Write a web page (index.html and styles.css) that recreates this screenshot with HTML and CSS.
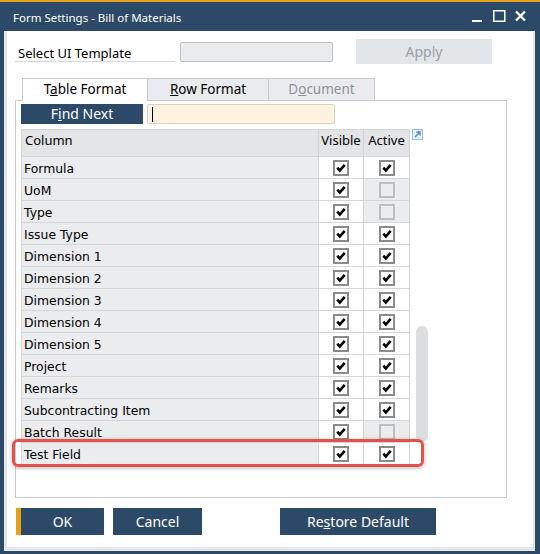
FILE: index.html
```html
<!DOCTYPE html>
<html>
<head>
<meta charset="utf-8">
<link rel="stylesheet" href="styles.css">
</head>
<body>
<div class="window">
  <div class="titlebar">
    <span class="title">Form Settings - Bill of Materials</span>
    <svg class="controls" width="80" height="29" viewBox="0 0 80 29">
      <rect x="12" y="18" width="10" height="2" fill="#fff"/>
      <rect x="33.75" y="8.75" width="11" height="10.5" fill="none" stroke="#fff" stroke-width="1.5"/>
      <path d="M56 9.5 L65 18.5 M65 9.5 L56 18.5" stroke="#fff" stroke-width="2.3"/>
    </svg>
  </div>
  <div class="client">
    <div class="tpl-row">
      <div class="tpl-label">Select UI Template</div>
      <div class="tpl-input"></div>
      <button class="apply">Apply</button>
    </div>
    <div class="tabs">
      <div class="tab active">T<u>a</u>ble Format</div>
      <div class="tab tab-row"><u>R</u>ow Format</div>
      <div class="tab tab-doc disabled">D<u>o</u>cument</div>
    </div>
    <div class="panel">
      <div class="find-row">
        <button class="btn find">F<u>i</u>nd Next</button>
        <div class="find-input"><span class="caret"></span></div>
      </div>
      <div class="grid-area">
        <div class="table-wrap">
          <div class="grid">
            <div class="hd hd-name">Column</div>
            <div class="hd">Visible</div>
            <div class="hd">Active</div>

            <div class="c-name">Formula</div><div class="c-chk"><span class="cb on"></span></div><div class="c-chk"><span class="cb on"></span></div>
            <div class="c-name">UoM</div><div class="c-chk"><span class="cb on"></span></div><div class="c-chk off"><span class="cb dis"></span></div>
            <div class="c-name">Type</div><div class="c-chk"><span class="cb on"></span></div><div class="c-chk off"><span class="cb dis"></span></div>
            <div class="c-name">Issue Type</div><div class="c-chk"><span class="cb on"></span></div><div class="c-chk"><span class="cb on"></span></div>
            <div class="c-name">Dimension 1</div><div class="c-chk"><span class="cb on"></span></div><div class="c-chk"><span class="cb on"></span></div>
            <div class="c-name">Dimension 2</div><div class="c-chk"><span class="cb on"></span></div><div class="c-chk"><span class="cb on"></span></div>
            <div class="c-name">Dimension 3</div><div class="c-chk"><span class="cb on"></span></div><div class="c-chk"><span class="cb on"></span></div>
            <div class="c-name">Dimension 4</div><div class="c-chk"><span class="cb on"></span></div><div class="c-chk"><span class="cb on"></span></div>
            <div class="c-name">Dimension 5</div><div class="c-chk"><span class="cb on"></span></div><div class="c-chk"><span class="cb on"></span></div>
            <div class="c-name">Project</div><div class="c-chk"><span class="cb on"></span></div><div class="c-chk"><span class="cb on"></span></div>
            <div class="c-name">Remarks</div><div class="c-chk"><span class="cb on"></span></div><div class="c-chk"><span class="cb on"></span></div>
            <div class="c-name">Subcontracting Item</div><div class="c-chk"><span class="cb on"></span></div><div class="c-chk"><span class="cb on"></span></div>
            <div class="c-name">Batch Result</div><div class="c-chk"><span class="cb on"></span></div><div class="c-chk off"><span class="cb dis"></span></div>
            <div class="c-name">Test Field</div><div class="c-chk"><span class="cb on"></span></div><div class="c-chk"><span class="cb on"></span></div>
          </div>
          <div class="highlight"></div>
        </div>
        <div class="side">
          <svg class="expand" width="11" height="11" viewBox="0 0 11 11">
            <rect x="0.5" y="0.5" width="10" height="10" fill="#e3eef9" stroke="#9cc0e4"/>
            <path d="M3 8 L8 3 M4.5 3 H8 V6.5" fill="none" stroke="#4f8ac6" stroke-width="1.4"/>
          </svg>
          <div class="thumb"></div>
        </div>
      </div>
    </div>
    <div class="footer">
      <button class="btn ok">OK</button>
      <button class="btn cancel">Cancel</button>
      <button class="btn restore">Re<u>s</u>tore Default</button>
    </div>
  </div>
</div>
</body>
</html>
```
FILE: styles.css
```css
* { box-sizing: border-box; }
html, body { margin: 0; padding: 0; background: #fff; }
body { font-family: "DejaVu Sans", sans-serif; font-size: 12px; color: #000; }

.window {
  width: 540px;
  height: 554px;
  background: #2c4a67;
  display: flex;
  flex-direction: column;
}
.titlebar {
  height: 31px;
  border-top: 2px solid #e6a21e;
  display: flex;
  align-items: center;
  padding-left: 13px;
  padding-top: 1px;
  color: #fff;
  font-family: "Noto Sans", sans-serif;
  font-size: 11.5px;
}
.controls { margin-left: auto; margin-right: 0; margin-top: -1px; display: block; }

.client {
  flex: 1;
  margin: 0 5px 3px 4px;
  background: #fff;
  border-left: 3px solid #e4e6e9;
  border-right: 2px solid #e4e6e9;
  border-bottom: 4px solid #e4e6e9;
}

.tpl-row {
  display: flex;
  align-items: flex-start;
  margin: 8px 0 0 8px;
  height: 25px;
}
.tpl-label {
  width: 160px;
  height: 23px;
  padding: 6px 0 0 3px;
  line-height: 16px;
  border-bottom: 1px solid #d6d8da;
  font-size: 13px;
  font-family: "Noto Sans", sans-serif;
}
.tpl-input {
  margin: 3px 0 0 5px;
  width: 153px;
  height: 20px;
  border: 1px solid #bfc1c3;
  border-radius: 2px;
  background: #e9ebed;
}
.apply {
  margin-left: 23px;
  width: 136px;
  height: 25px;
  border: none;
  background: #e3e6e9;
  color: #9aa0a6;
  font-family: "Noto Sans", sans-serif;
  font-size: 14px;
  padding: 0;
}

.tabs {
  display: flex;
  align-items: flex-start;
  margin: 14px 0 -1px 15px;
  height: 23px;
  position: relative;
  z-index: 1;
  font-family: "Noto Sans", sans-serif;
  font-size: 13.5px;
}
.tab {
  height: 22px;
  border: 1px solid #c9cbce;
  border-bottom: none;
  background: #e9ebee;
  text-align: center;
  line-height: 20px;
  color: #000;
}
.tab.active { width: 126px; height: 23px; background: #fff; }
.tab-row { width: 122px; margin-left: -1px; }
.tab-doc { width: 107px; margin-left: -1px; }
.tab.disabled { color: #8d9399; }

.panel {
  margin-left: 8px;
  width: 492px;
  height: 398px;
  border: 1px solid #c9cbce;
  padding: 3px 5px;
}
.find-row { display: flex; gap: 4px; }
.btn {
  border: none;
  background: #2c4a67;
  color: #fff;
  font-family: "Noto Sans", sans-serif;
  font-size: 14px;
  padding: 0;
}
.find { width: 122px; height: 20px; line-height: 18px; }
.find-input {
  width: 188px;
  height: 20px;
  background: #fdf2de;
  border: 1px solid #dcd3c3;
  border-radius: 2px;
  display: flex;
  align-items: center;
}
.caret { width: 1px; height: 15px; background: #000; margin-left: 4px; }

.grid-area { display: flex; margin-top: 5px; }
.table-wrap { position: relative; width: 390px; }
.grid {
  display: grid;
  grid-template-columns: 297px 45px 46px;
  grid-template-rows: 27px;
  grid-auto-rows: 22px;
  width: 389px;
  border-left: 1px solid #d3d5d8;
  border-top: 1px solid #d3d5d8;
}
.grid > div {
  border-right: 1px solid #d3d5d8;
  border-bottom: 1px solid #d3d5d8;
}
.hd {
  background: #e3e4e6;
  display: flex;
  align-items: center;
  justify-content: center;
  font-family: "Noto Sans", sans-serif;
  font-size: 13px;
  padding-bottom: 6px;
}
.hd-name { justify-content: flex-start; padding-left: 3px; }
.c-name {
  background: #eaecee;
  padding-left: 2px;
  line-height: 23px;
  font-size: 12.4px;
}
.c-chk {
  background: #fff;
  display: flex;
  align-items: center;
  justify-content: center;
}
.c-chk.off { background: #eaecee; }
.cb {
  width: 16px;
  height: 16px;
  border: 2px solid #8a8a8a;
  background: #fff;
  display: block;
}
.cb.on {
  background: #fff url("data:image/svg+xml;utf8,<svg xmlns='http://www.w3.org/2000/svg' width='12' height='12' viewBox='0 0 12 12'><path d='M2.3 5.6 L4.8 8.6 L9.7 2.8' fill='none' stroke='black' stroke-width='2.6'/></svg>") center/12px 12px no-repeat;
}
.cb.dis { border-color: #bdbdbd; background: #eaecee; }

.highlight {
  position: absolute;
  left: -9px;
  top: 310px;
  width: 412px;
  height: 28px;
  border: 3px solid #e4504c;
  border-radius: 6px;
  box-shadow: 0 1px 4px rgba(0,0,0,0.3);
}

.side { display: flex; flex-direction: column; width: 17px; }
.expand { margin-left: 1px; display: block; }
.thumb {
  margin: 186px 0 0 5px;
  width: 12px;
  height: 116px;
  border-radius: 6px;
  background: #dcdddf;
}

.footer { display: flex; margin: 10px 0 0 9px; }
.footer .btn { height: 27px; }
.ok { width: 88px; border-left: 5px solid #e2a11d; }
.cancel { width: 89px; margin-left: 9px; }
.restore { width: 156px; margin-left: 78px; }
```
